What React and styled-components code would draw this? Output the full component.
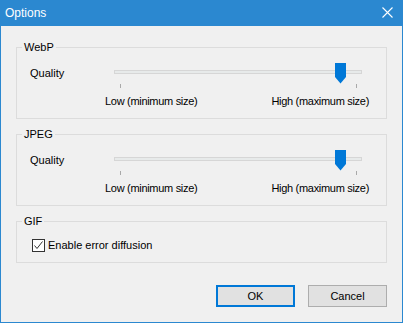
import React from "react";
import styled, { createGlobalStyle } from "styled-components";

const GlobalStyle = createGlobalStyle`
  html, body { margin: 0; padding: 0; background: #f0f0f0; }
  * { box-sizing: border-box; }
`;

const UI_FONT = `"Liberation Sans", Arial, sans-serif`;

const Window = styled.div`
  width: 403px;
  height: 323px;
  border: 1px solid #2b88d0;
  border-top: 0;
  background: #f0f0f0;
  display: flex;
  flex-direction: column;
  font-family: ${UI_FONT};
  font-size: 11px;
  color: #000;
`;

const TitleBar = styled.div`
  height: 26px;
  margin: 0 -1px;
  background: #2b88d0;
  color: #fff;
  display: flex;
  align-items: center;
  justify-content: space-between;
  padding: 0 10px 0 5px;
  font-size: 12px;
  line-height: 26px;
`;

const Title = styled.span`
  margin-top: -1px;
`;

const CloseIcon = styled.svg`
  display: block;
  width: 11px;
  height: 11px;
  margin-top: -1px;
`;

const Content = styled.div`
  flex: 1;
  display: flex;
  flex-direction: column;
  padding: 14px 15px 0 15px;
`;

const Group = styled.fieldset`
  margin: 0 0 ${(p) => p.$gap ?? 8}px 0;
  padding: 0 0 ${(p) => p.$padBottom ?? 9}px 0;
  border: 1px solid #dcdcdc;
  min-width: 0;
`;

const Legend = styled.legend`
  margin-left: 5px;
  padding: 0 2px;
  line-height: 15px;
  font-size: 11px;
`;

const SliderRow = styled.div`
  display: flex;
  margin-top: 8px;
  padding-left: 13px;
`;

const FieldLabel = styled.div`
  width: 84px;
  height: 21px;
  line-height: 21px;
`;

const SliderColumn = styled.div`
  width: 248px;
  display: flex;
  flex-direction: column;
`;

const Slider = styled.div`
  position: relative;
  height: 21px;
`;

const Track = styled.div`
  margin-top: 7px;
  height: 4px;
  border: 1px solid #d6d6d6;
  background: #e7eaea;
`;

const Thumb = styled.svg`
  position: absolute;
  top: 0;
  width: 11px;
  height: 21px;
  display: block;
`;

const Ticks = styled.div`
  display: flex;
  justify-content: space-between;
  height: 4px;
  padding: 0 5px 0 6px;
`;

const Tick = styled.span`
  width: 1px;
  height: 4px;
  background: #a9a9a9;
`;

const Scale = styled.div`
  display: flex;
  justify-content: space-between;
  margin: 5px -7px 0 -9px;
  line-height: 16px;
  letter-spacing: -0.3px;
`;

const CheckRow = styled.label`
  display: flex;
  align-items: center;
  gap: 3px;
  margin-top: 8px;
  padding-left: 15px;
  line-height: 16px;
`;

const CheckBox = styled.span`
  width: 13px;
  height: 13px;
  border: 1px solid #333;
  background: #fff;
  display: flex;
  align-items: center;
  justify-content: center;
`;

const Buttons = styled.div`
  display: flex;
  justify-content: flex-end;
  gap: 13px;
  margin-top: 22px;
`;

const Button = styled.button`
  width: 79px;
  height: 22px;
  padding: 0;
  font-family: ${UI_FONT};
  font-size: 11px;
  color: #000;
  background: #e1e1e1;
  border: ${(p) => (p.$default ? "2px solid #0078d7" : "1px solid #adadad")};
`;

function QualitySlider({ value }) {
  const min = 6;
  const max = 242;
  const center = min + ((max - min) * value) / 100;
  return (
    <SliderRow>
      <FieldLabel>Quality</FieldLabel>
      <SliderColumn>
        <Slider>
          <Track />
          <Thumb viewBox="0 0 11 21" style={{ left: `${center - 5.5}px` }}>
            <path d="M0 0 H11 V14 L5.5 20.5 L0 14 Z" fill="#0078d7" />
          </Thumb>
        </Slider>
        <Ticks>
          <Tick />
          <Tick />
        </Ticks>
        <Scale>
          <span>Low (minimum size)</span>
          <span>High (maximum size)</span>
        </Scale>
      </SliderColumn>
    </SliderRow>
  );
}

export default function App() {
  return (
    <>
      <GlobalStyle />
      <Window>
        <TitleBar>
          <Title>Options</Title>
          <CloseIcon viewBox="0 0 11 11">
            <path d="M0.5 0.5 L10.5 10.5 M10.5 0.5 L0.5 10.5" stroke="#fff" strokeWidth="1.1" />
          </CloseIcon>
        </TitleBar>
        <Content>
          <Group>
            <Legend>WebP</Legend>
            <QualitySlider value={93.6} />
          </Group>
          <Group>
            <Legend>JPEG</Legend>
            <QualitySlider value={93.6} />
          </Group>
          <Group $padBottom={9} $gap={0}>
            <Legend>GIF</Legend>
            <CheckRow>
              <CheckBox>
                <svg width="11" height="11" viewBox="0 0 11 11">
                  <path d="M1.5 5.5 L4 8.5 L9.5 1.5" fill="none" stroke="#333" strokeWidth="1" />
                </svg>
              </CheckBox>
              <span>Enable error diffusion</span>
            </CheckRow>
          </Group>
          <Buttons>
            <Button $default>OK</Button>
            <Button>Cancel</Button>
          </Buttons>
        </Content>
      </Window>
    </>
  );
}
